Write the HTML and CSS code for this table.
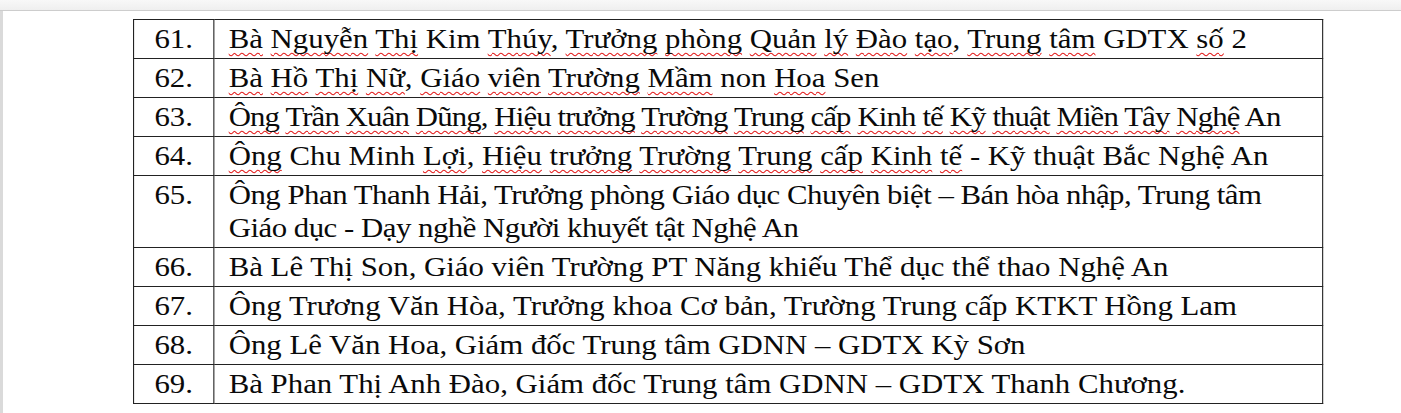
FILE: index.html
```html
<!DOCTYPE html>
<html lang="vi">
<head>
<meta charset="utf-8">
<title>Danh sách</title>
<link rel="stylesheet" href="styles.css">
</head>
<body>
<div class="chrome"></div>
<div class="page">
  <table class="list">
    <colgroup><col class="c-num"><col class="c-text"></colgroup>
    <tr><td class="num">61.</td><td class="txt"><span class="sp">Bà</span> <span class="sp">Nguyễn</span> <span class="sp">Thị</span> Kim <span class="sp">Thúy</span>, <span class="sp">Trưởng</span> <span class="sp">phòng</span> <span class="sp">Quản</span> <span class="sp">lý</span> <span class="sp">Đào</span> <span class="sp">tạo</span>, <span class="sp">Trung</span> <span class="sp">tâm</span> GDTX <span class="sp">số</span> 2</td></tr>
    <tr><td class="num">62.</td><td class="txt"><span class="sp">Bà</span> <span class="sp">Hồ</span> <span class="sp">Thị</span> <span class="sp">Nữ</span>, <span class="sp">Giáo</span> <span class="sp">viên</span> <span class="sp">Trường</span> <span class="sp">Mầm</span> non <span class="sp">Hoa</span> Sen</td></tr>
    <tr><td class="num">63.</td><td class="txt tight"><span class="sp">Ông</span> <span class="sp">Trần</span> <span class="sp">Xuân</span> <span class="sp">Dũng</span>, <span class="sp">Hiệu</span> <span class="sp">trưởng</span> <span class="sp">Trường</span> <span class="sp">Trung</span> <span class="sp">cấp</span> <span class="sp">Kinh</span> <span class="sp">tế</span> <span class="sp">Kỹ</span> <span class="sp">thuật</span> <span class="sp">Miền</span> <span class="sp">Tây</span> <span class="sp">Nghệ</span> An</td></tr>
    <tr><td class="num">64.</td><td class="txt"><span class="sp">Ông</span> Chu Minh <span class="sp">Lợi</span>, <span class="sp">Hiệu</span> <span class="sp">trưởng</span> <span class="sp">Trường</span> <span class="sp">Trung</span> <span class="sp">cấp</span> <span class="sp">Kinh</span> <span class="sp">tế</span> - Kỹ thuật Bắc Nghệ An</td></tr>
    <tr><td class="num">65.</td><td class="txt snug">Ông Phan Thanh Hải, Trưởng phòng Giáo dục Chuyên biệt – Bán hòa nhập, Trung tâm Giáo dục - Dạy nghề Người khuyết tật Nghệ An</td></tr>
    <tr><td class="num">66.</td><td class="txt">Bà Lê Thị Son, Giáo viên Trường PT Năng khiếu Thể dục thể thao Nghệ An</td></tr>
    <tr><td class="num">67.</td><td class="txt">Ông Trương Văn Hòa, Trưởng khoa Cơ bản, Trường Trung cấp KTKT Hồng Lam</td></tr>
    <tr><td class="num">68.</td><td class="txt">Ông Lê Văn Hoa, Giám đốc Trung tâm GDNN – GDTX Kỳ Sơn</td></tr>
    <tr><td class="num">69.</td><td class="txt">Bà Phan Thị Anh Đào, Giám đốc Trung tâm GDNN – GDTX Thanh Chương.</td></tr>
  </table>
</div>
</body>
</html>
```
FILE: styles.css
```css
html, body {
  margin: 0;
  padding: 0;
  background: #fff;
}
body {
  font-family: "Liberation Serif", "Times New Roman", serif;
  color: #0a0a0a;
  width: 1401px;
  height: 413px;
  overflow: hidden;
}
.chrome {
  height: 10px;
  background: linear-gradient(#f8f8f8, #efefef);
  border-bottom: 1px solid #cdcdcd;
}
.page {
  border-left: 3px solid #dadada;
  padding: 8px 0 0 130px;
  height: 394px;
}
.list {
  border-collapse: collapse;
  width: 1082px;
  table-layout: fixed;
  border: 1.5px solid #222;
  transform: scaleX(1.1);
  transform-origin: 0 0;
}
.c-num { width: 73px; }
.list td {
  border: 1px solid #222;
  font-size: 28px;
  line-height: 33px;
  padding: 2px 0 3px 0;
  vertical-align: top;
}
.num {
  text-align: center;
}
.list td.txt {
  padding-left: 13px;
  padding-right: 20px;
}
.tight {
  letter-spacing: -0.8px;
}
.snug {
  letter-spacing: -0.45px;
}
.sp {
  text-decoration: underline wavy #e31b1b;
  text-decoration-thickness: 1px;
  text-underline-offset: 4px;
  text-decoration-skip-ink: none;
}
```
